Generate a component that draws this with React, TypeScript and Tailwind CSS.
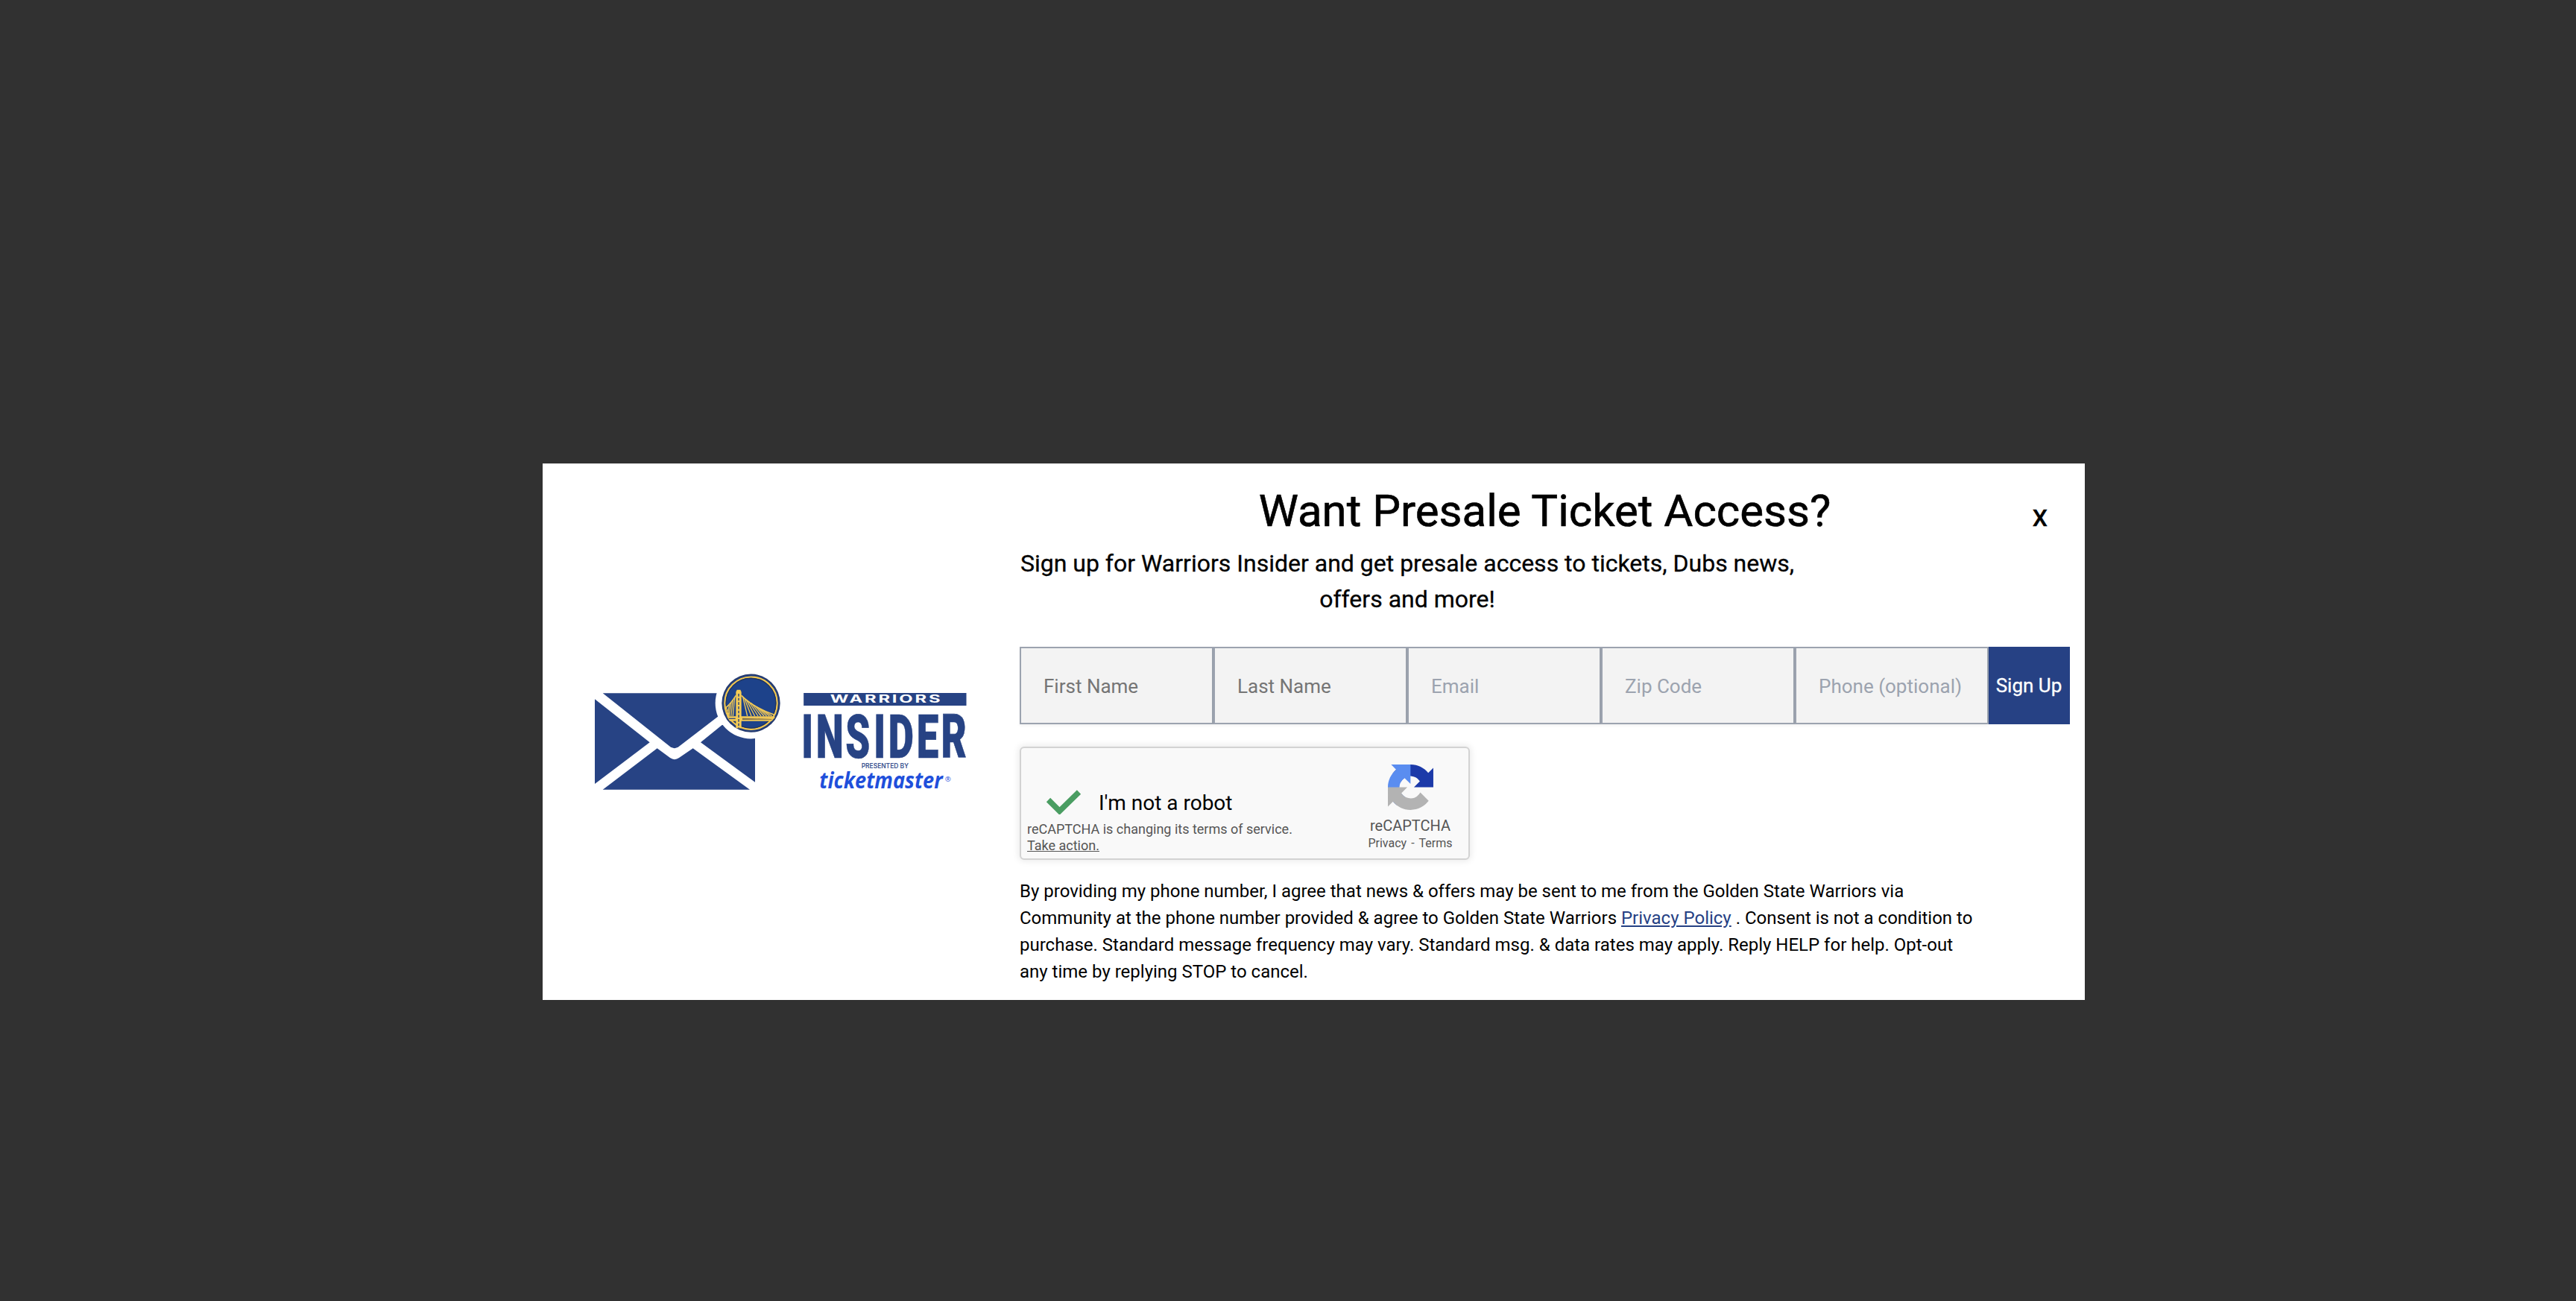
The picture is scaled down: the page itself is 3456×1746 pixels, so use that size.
import React from "react";

const fields = [
  { label: "First Name", tone: "placeholder:text-[#757575]" },
  { label: "Last Name", tone: "placeholder:text-[#757575]" },
  { label: "Email", tone: "placeholder:text-[#9ca3af]" },
  { label: "Zip Code", tone: "placeholder:text-[#9ca3af]" },
  { label: "Phone (optional)", tone: "placeholder:text-[#9ca3af]" },
];

// Suspension cables: top x, top y, foot x on the bridge deck
const cables = [
  [650, 166, 668],
  [656, 171, 684],
  [664, 177, 698],
  [673, 183, 711],
  [684, 191, 723],
  [696, 199, 735],
  [708, 207, 746],
  [721, 215, 757],
  [735, 222, 767],
  [617, 168, 610],
  [610, 178, 602],
  [603, 187, 594],
  [596, 197, 587],
];

function InsiderLogo() {
  return (
    <svg
      viewBox="48 66 1512 480"
      className="h-[160px] w-[504px] shrink-0 overflow-visible"
      role="img"
      aria-label="Warriors Insider"
    >
      <g fill="#274384">
        <path d="M54 175 275 349 54 516Z" />
        <path d="M86 151H600V206L391 367Q375 378 358 367Z" />
        <path d="M86 539 305 373 357 411Q375 424 393 411L449 373 678 539Z" />
        <path d="M566 279 480 349 699 509V279Z" />
      </g>
      <circle cx="682.5" cy="191" r="143.5" fill="#fff" />
      <circle cx="682.5" cy="191" r="117.5" fill="#263b6e" />
      <circle cx="682.5" cy="191" r="112" fill="#1f428a" />
      <circle cx="682.5" cy="191" r="105.5" fill="#1d428a" stroke="#f5c84c" strokeWidth="6.5" />
      <circle cx="682.5" cy="191" r="100" fill="none" stroke="#22365f" strokeWidth="3.5" />
      <g stroke="#f0c856" fill="none">
        <path d="M644 160Q690 207 776 238" strokeWidth="5" />
        <path d="M622 160Q602 192 582 209" strokeWidth="5" />
        {cables.map(([x1, y1, x2]) => (
          <path key={x2} d={`M${x1} ${y1}L${x2} 243`} strokeWidth="4" />
        ))}
        <path d="M583 209 596 243" strokeWidth="4" />
      </g>
      <path d="M585 244H778V250L766 263H597Z" fill="#f0c856" />
      <path d="M648 251 766 255V257L648 258Z" fill="#7d6f4c" />
      <path d="M592 251H620V255H595Z" fill="#33487a" />
      <path d="M622 146 626 137H640L644 146V292H622Z" fill="#f5cc55" />
      <path d="M633 153V292" stroke="#33487a" strokeWidth="4.5" strokeDasharray="11 6" />
      <rect x="894.5" y="150" width="655" height="51" fill="#274384" />
      <text
        x="1001"
        y="190"
        textLength="452"
        lengthAdjust="spacingAndGlyphs"
        fill="#fff"
        className="font-['Inter'] text-[42px] font-bold tracking-[5px]"
      >
        WARRIORS
      </text>
      <text
        transform="scale(0.64 1)"
        x="1384 1476 1661 1839 1930 2108 2262"
        y="411"
        fill="#274384"
        stroke="#274384"
        strokeWidth="2"
        className="font-['Roboto'] text-[247px] font-black"
      >
        INSIDER
      </text>
      <text
        x="1127"
        y="453"
        textLength="190"
        lengthAdjust="spacingAndGlyphs"
        fill="#3a5390"
        className="font-['Inter'] text-[25px] font-semibold"
      >
        PRESENTED BY
      </text>
      <text
        x="958"
        y="534"
        textLength="496"
        lengthAdjust="spacingAndGlyphs"
        fill="#1f4fdb"
        className="font-['Open_Sans'] text-[91px] font-bold italic"
      >
        ticketmaster
      </text>
      <text x="1463" y="506" fill="#1f4fdb" className="font-['Open_Sans'] text-[29px]">
        ®
      </text>
    </svg>
  );
}

function RecaptchaMark() {
  return (
    <svg viewBox="0 0 64 64" className="h-[61px] w-[61px]">
      <path
        fill="#1c3aa9"
        d="M64 31.955l-.033-1.37V4.687l-7.16 7.16C50.948 4.674 42.033.093 32.05.093c-10.4 0-19.622 4.96-25.458 12.64l11.736 11.86a15.55 15.55 0 0 1 4.754-5.334c2.05-1.6 4.952-2.906 8.968-2.906.485 0 .86.057 1.135.163 4.976.393 9.288 3.14 11.828 7.124l-8.307 8.307L64 31.953"
      />
      <path
        fill="#5a8df0"
        d="M31.862.094l-1.37.033H4.594l7.16 7.16C4.58 13.147 0 22.06 0 32.046c0 10.4 4.96 19.622 12.64 25.458L24.5 45.768a15.55 15.55 0 0 1-5.334-4.754c-1.6-2.05-2.906-4.952-2.906-8.968 0-.485.057-.86.163-1.135.393-4.976 3.14-9.288 7.124-11.828l8.307 8.307L31.86.095"
      />
      <path
        fill="#b3b3b3"
        d="M.001 32.045l.033 1.37v25.898l7.16-7.16c5.86 7.173 14.774 11.754 24.76 11.754 10.4 0 19.622-4.96 25.458-12.64l-11.736-11.86a15.55 15.55 0 0 1-4.754 5.334c-2.05 1.6-4.952 2.906-8.968 2.906-.485 0-.86-.057-1.135-.163-4.976-.393-9.288-3.14-11.828-7.124l8.307-8.307c-10.522.04-22.4.066-27.295-.005"
      />
    </svg>
  );
}

function Recaptcha() {
  return (
    <div className="mt-[30px] flex h-[152px] w-[604px] justify-between rounded-[6px] border-2 border-[#d3d3d3] bg-[#f9f9f9] shadow-[0_0_8px_2px_rgba(0,0,0,0.08)]">
      <div className="flex flex-col pl-2 pt-[52px]">
        <div className="flex h-[46px] items-start pl-[25px]">
          <svg viewBox="0 0 48 34" className="mt-[3px] h-[34px] w-[48px]">
            <path d="M3.5 14.5 18.5 29.5 44.5 4" fill="none" stroke="#4a9d62" strokeWidth="7.5" />
          </svg>
          <div className="ml-[23px] mt-[5px] text-[28px] leading-[34px] text-black">I'm not a robot</div>
        </div>
        <div className="text-[18px] leading-[22px] text-[#555]">
          reCAPTCHA is changing its terms of service.
          <br />
          <a className="underline">Take action.</a>
        </div>
      </div>
      <div className="mr-[14px] flex w-[128px] flex-col items-center pt-[22px] text-[#555]">
        <RecaptchaMark />
        <div className="mt-[9px] text-[20px] leading-[24px]">reCAPTCHA</div>
        <div className="mt-[2px] flex text-[16px] leading-[20px]">
          <span>Privacy</span>
          <span className="px-[6px]">-</span>
          <span>Terms</span>
        </div>
      </div>
    </div>
  );
}

export default function App() {
  return (
    <div className="flex h-[1746px] w-[3456px] items-start bg-[#313131] pl-[728px] pt-[622px] font-['Roboto',sans-serif] text-black">
      <div className="relative flex h-[720px] w-[2069px] bg-white">
        <div className="flex w-[640px] shrink-0 items-center pl-[68px]">
          <InsiderLogo />
        </div>
        <div className="flex w-[1409px] flex-col pt-[28px]">
          <h1 className="text-center text-[60px] leading-[72px] [-webkit-text-stroke:0.6px_black]">
            Want Presale Ticket Access?
          </h1>
          <p className="mt-[10px] w-[1040px] text-center text-[32px] leading-[48px] [-webkit-text-stroke:0.3px_black]">
            Sign up for Warriors Insider and get presale access to tickets, Dubs news,
            <br />
            offers and more!
          </p>
          <form className="mt-[40px] flex h-[104px]">
            {fields.map(({ label, tone }) => (
              <input
                key={label}
                placeholder={label}
                className={`h-[104px] w-[260px] border-2 border-[#9ca3af] bg-[#f3f3f3] px-[30px] pt-[2px] text-[26px] shadow-[0_2px_4px_rgba(0,0,0,0.06)] placeholder:opacity-100 ${tone}`}
              />
            ))}
            <button
              type="button"
              className="h-[104px] w-[109px] bg-[#264184] pr-px text-[26px] text-white [-webkit-text-stroke:0.3px_white]"
            >
              Sign Up
            </button>
          </form>
          <Recaptcha />
          <p className="mt-[24px] whitespace-nowrap text-[24px] leading-[36px]">
            By providing my phone number, I agree that news &amp; offers may be sent to me from the Golden State
            Warriors via
            <br />
            Community at the phone number provided &amp; agree to Golden State Warriors{" "}
            <a className="text-[#264184] underline">Privacy Policy</a> . Consent is not a condition to
            <br />
            purchase. Standard message frequency may vary. Standard msg. &amp; data rates may apply. Reply HELP for
            help. Opt-out
            <br />
            any time by replying STOP to cancel.
          </p>
        </div>
        <button
          type="button"
          className="absolute right-[50px] top-[51px] text-[32px] font-medium leading-[44px] [-webkit-text-stroke:0.3px_black]"
        >
          X
        </button>
      </div>
    </div>
  );
}
